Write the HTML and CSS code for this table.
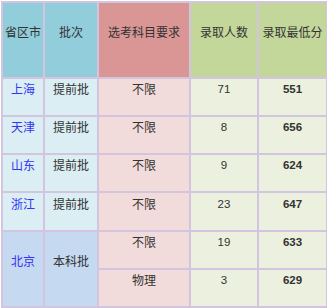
FILE: index.html
```html
<!DOCTYPE html>
<html lang="zh">
<head>
<meta charset="utf-8">
<link rel="stylesheet" href="styles.css">
</head>
<body>
<table class="score-table">
  <colgroup>
    <col class="c-prov">
    <col class="c-batch">
    <col class="c-subj">
    <col class="c-num">
    <col class="c-min">
  </colgroup>
  <thead>
    <tr>
      <th class="h-blue">省区市</th>
      <th class="h-blue">批次</th>
      <th class="h-red">选考科目要求</th>
      <th class="h-green">录取人数</th>
      <th class="h-green">录取最低分</th>
    </tr>
  </thead>
  <tbody>
    <tr>
      <td class="b-blue prov">上海</td>
      <td class="b-blue">提前批</td>
      <td class="b-red">不限</td>
      <td class="b-green num">71</td>
      <td class="b-green num bold">551</td>
    </tr>
    <tr>
      <td class="b-blue prov">天津</td>
      <td class="b-blue">提前批</td>
      <td class="b-red">不限</td>
      <td class="b-green num">8</td>
      <td class="b-green num bold">656</td>
    </tr>
    <tr>
      <td class="b-blue prov">山东</td>
      <td class="b-blue">提前批</td>
      <td class="b-red">不限</td>
      <td class="b-green num">9</td>
      <td class="b-green num bold">624</td>
    </tr>
    <tr class="tall">
      <td class="b-blue prov">浙江</td>
      <td class="b-blue">提前批</td>
      <td class="b-red">不限</td>
      <td class="b-green num">23</td>
      <td class="b-green num bold">647</td>
    </tr>
    <tr>
      <td class="b-deep prov" rowspan="2">北京</td>
      <td class="b-deep" rowspan="2">本科批</td>
      <td class="b-red">不限</td>
      <td class="b-green num">19</td>
      <td class="b-green num bold">633</td>
    </tr>
    <tr>
      <td class="b-red">物理</td>
      <td class="b-green num">3</td>
      <td class="b-green num bold">629</td>
    </tr>
  </tbody>
</table>
</body>
</html>
```
FILE: styles.css
```css
html, body {
  margin: 0;
  padding: 0;
  background: #ffffff;
}

.score-table {
  border-collapse: collapse;
  table-layout: fixed;
  width: 325px;
  margin: 1px 0 0 1px;
  font-family: "Noto Sans CJK SC", "Noto Sans", sans-serif;
  font-size: 12px;
  line-height: 14px;
  color: #333333;
}

.c-prov { width: 42px; }
.c-batch { width: 54px; }
.c-subj { width: 92px; }
.c-num { width: 68px; }
.c-min { width: 69px; }

.score-table th,
.score-table td {
  border: 2px solid #d3c4e0;
  padding: 3px 0 19px;
  text-align: center;
  vertical-align: middle;
  font-weight: normal;
  white-space: nowrap;
  overflow: hidden;
}

.score-table th {
  height: 52px;
  padding-bottom: 19px;
}

.score-table td {
  height: 14px;
}

.score-table tr.tall td {
  height: 15px;
}

.h-blue { background: #92cddc; }
.h-red { background: #da9694; }
.h-green { background: #c4d79b; }

.b-blue { background: #daeef3; }
.b-deep { background: #c5d9f1; }
.b-red { background: #f2dcdb; }
.b-green { background: #ebf1de; }

.score-table td.prov { color: #3434f2; }

.score-table td.num {
  font-family: "Liberation Sans", sans-serif;
  font-size: 11.5px;
}

.score-table td.bold { font-weight: bold; }
```
